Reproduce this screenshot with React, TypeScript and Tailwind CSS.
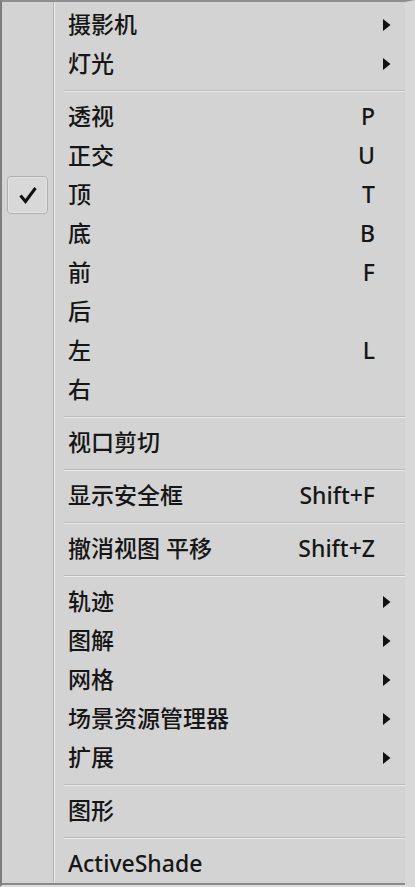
import React from "react";

type Item =
  | { type: "row"; label: string; shortcut?: string; arrow?: boolean; checked?: boolean }
  | { type: "sep" };

const items: Item[] = [
  { type: "row", label: "摄影机", arrow: true },
  { type: "row", label: "灯光", arrow: true },
  { type: "sep" },
  { type: "row", label: "透视", shortcut: "P" },
  { type: "row", label: "正交", shortcut: "U" },
  { type: "row", label: "顶", shortcut: "T", checked: true },
  { type: "row", label: "底", shortcut: "B" },
  { type: "row", label: "前", shortcut: "F" },
  { type: "row", label: "后" },
  { type: "row", label: "左", shortcut: "L" },
  { type: "row", label: "右" },
  { type: "sep" },
  { type: "row", label: "视口剪切" },
  { type: "sep" },
  { type: "row", label: "显示安全框", shortcut: "Shift+F" },
  { type: "sep" },
  { type: "row", label: "撤消视图 平移", shortcut: "Shift+Z" },
  { type: "sep" },
  { type: "row", label: "轨迹", arrow: true },
  { type: "row", label: "图解", arrow: true },
  { type: "row", label: "网格", arrow: true },
  { type: "row", label: "场景资源管理器", arrow: true },
  { type: "row", label: "扩展", arrow: true },
  { type: "sep" },
  { type: "row", label: "图形" },
  { type: "sep" },
  { type: "row", label: "ActiveShade" },
];

function Gutter({ children }: { children?: React.ReactNode }) {
  return (
    <div className="flex w-[52px] shrink-0 items-center justify-center border-r border-[#b3b3b3]">
      {children}
    </div>
  );
}

function CheckBox() {
  return (
    <div className="flex h-[38px] w-[41px] items-center justify-center rounded-[4px] border border-[#afafaf] bg-[#d8d8d8] shadow-[inset_0_0_0_1px_#e4e4e4]">
      <svg width="20" height="18" viewBox="0 0 20 18">
        <path d="M2.5 9.5 L7.5 15.5 L17.5 2" fill="none" stroke="#111" strokeWidth="3" strokeLinejoin="miter" />
      </svg>
    </div>
  );
}

function Arrow() {
  return (
    <svg width="8" height="12" viewBox="0 0 8 12">
      <polygon points="0,0 7.5,6 0,12" fill="#111" />
    </svg>
  );
}

export default function App() {
  return (
    <div
      className="flex h-[887px] w-[415px] flex-col border-l-2 border-t-2 border-r-[10px] border-b-2 border-l-[#7d7d7d] border-t-[#8e8e8e] border-r-[#d8d8d8] border-b-[#dedede] bg-[#d3d3d3] text-[23px] font-medium text-[#161616]"
      style={{ fontFamily: "'Noto Sans', 'Noto Sans CJK SC', sans-serif" }}
    >
      <div className="flex h-[3px]">
        <Gutter />
        <div className="flex-1 border-l border-[#ececec]" />
      </div>
      {items.map((it, i) =>
        it.type === "sep" ? (
          <div key={i} className="flex h-[14px]">
            <Gutter />
            <div className="flex-1 border-l border-[#ececec] pl-[9px] pt-[7px]">
              <div className="h-px bg-[#bababa]" />
              <div className="h-px bg-[#ebebeb]" />
            </div>
          </div>
        ) : (
          <div key={i} className="flex h-[39px]">
            <Gutter>{it.checked && <CheckBox />}</Gutter>
            <div className="flex flex-1 items-center border-l border-[#ececec] pl-[13px] leading-none">
              <span className="flex-1 whitespace-pre">{it.label}</span>
              {it.shortcut && <span className="whitespace-nowrap">{it.shortcut}</span>}
              <span className="flex w-[30px] items-center pl-[8px]">{it.arrow && <Arrow />}</span>
            </div>
          </div>
        )
      )}
      <div className="flex flex-1">
        <Gutter />
        <div className="flex-1 border-l border-[#ececec]" />
      </div>
      <div className="h-[2px] bg-[#8a8a8a]" />
    </div>
  );
}
